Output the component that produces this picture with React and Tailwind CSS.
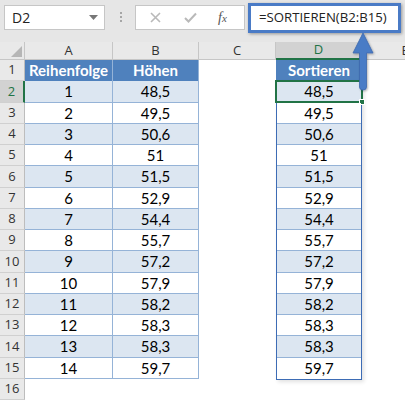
import React from "react";

const werte = ["48,5", "49,5", "50,6", "51", "51,5", "52,9", "54,4", "55,7", "57,2", "57,9", "58,2", "58,3", "58,3", "59,7"];

// Excel rows are about 21.25px high
const heights = Array.from({ length: 16 }, (_, i) => Math.round((i + 1) * 21.25) - Math.round(i * 21.25));
const hCls = (i) => (heights[i] === 22 ? "h-[22px]" : "h-[21px]");

const ui = { fontFamily: '"Open Sans", "Noto Sans", sans-serif' };
const cell = { fontFamily: 'Lato, "Noto Sans", sans-serif' };

function ColHead({ label, active, last }) {
  return (
    <div
      className={
        "h-[18px] flex items-center justify-center text-[13px] " +
        (active
          ? "bg-[#d2d2d2] text-[#217346] border-b-2 border-[#217346] border-r border-r-[#bdbdbd]"
          : "bg-[#e9e9e9] text-[#333] border-b border-[#c6c6c6] " + (last ? "" : "border-r border-r-[#c6c6c6]"))
      }
      style={ui}
    >
      {label}
    </div>
  );
}

function RowHeaders() {
  return (
    <div className="w-[25px] flex flex-col shrink-0" style={ui}>
      <div className="h-[18px] bg-[#e9e9e9] border-r border-b border-[#c6c6c6] flex items-end justify-end p-[2px]">
        <svg width="11" height="11" viewBox="0 0 11 11">
          <polygon points="11,0 11,11 0,11" fill="#b6b6b6" />
        </svg>
      </div>
      {heights.map((h, i) => (
        <div
          key={i}
          className={
            hCls(i) +
            " flex items-center justify-center text-[13px] border-b border-[#d0d0d0] " +
            (i === 1
              ? "bg-[#d2d2d2] text-[#217346] border-r-2 border-r-[#217346]"
              : "bg-[#e9e9e9] text-[#333] border-r border-r-[#bdbdbd]")
          }
        >
          {i + 1}
        </div>
      ))}
    </div>
  );
}

function TableCol({ letter, width, title, values }) {
  return (
    <div className={"flex flex-col shrink-0 " + width}>
      <ColHead label={letter} />
      <div
        className={hCls(0) + " bg-[#4f81bd] text-white font-bold text-[15px] flex items-center justify-center border-r border-[#95b3d7]"}
        style={cell}
      >
        {title}
      </div>
      {values.map((v, i) => (
        <div
          key={i}
          className={
            hCls(i + 1) +
            " flex items-center justify-center text-[15px] text-black border-r border-b border-[#95b3d7] " +
            (i % 2 === 0 ? "bg-[#dce6f1]" : "bg-white")
          }
          style={cell}
        >
          {v}
        </div>
      ))}
      <div className={hCls(15)} />
    </div>
  );
}

function Arrow() {
  return (
    <svg className="absolute left-[348px] top-[30px]" width="30" height="64" viewBox="0 0 30 64">
      <defs>
        <filter id="sh" x="-30%" y="-10%" width="160%" height="130%">
          <feDropShadow dx="1" dy="1" stdDeviation="1.2" floodColor="#000" floodOpacity="0.3" />
        </filter>
      </defs>
      <path
        d="M15 3 L25 23 L18.5 23 L18.5 57 Q18.5 60 15 60 Q11.5 60 11.5 57 L11.5 23 L5 23 Z"
        fill="#4a7bc6"
        stroke="#3c68ad"
        strokeWidth="0.8"
        filter="url(#sh)"
      />
    </svg>
  );
}

export default function App() {
  const ids = werte.map((_, i) => i + 1);
  return (
    <div className="relative w-[405px] h-[401px] overflow-hidden bg-white">
      {/* formula bar */}
      <div className="h-[42px] bg-[#e6e6e6] flex items-start" style={ui}>
        <div className="ml-[4px] mt-[5px] w-[101px] h-[25px] bg-white border border-[#c6c6c6] flex items-center justify-between pl-[7px] pr-[6px]">
          <span className="text-[14px] text-[#222]">D2</span>
          <svg width="9" height="5" viewBox="0 0 9 5">
            <polygon points="0,0 9,0 4.5,5" fill="#777" />
          </svg>
        </div>
        <div className="ml-[15px] mt-[12px] flex flex-col gap-[2px]">
          <div className="w-[2px] h-[2px] bg-[#a6a6a6]" />
          <div className="w-[2px] h-[2px] bg-[#a6a6a6]" />
          <div className="w-[2px] h-[2px] bg-[#a6a6a6]" />
        </div>
        <div className="ml-[13px] mt-[5px] w-[110px] h-[25px] bg-white border border-[#c6c6c6] flex items-center">
          <svg className="ml-[14px]" width="11" height="11" viewBox="0 0 11 11">
            <path d="M1 1 L10 10 M10 1 L1 10" stroke="#b9b9b9" strokeWidth="1.6" />
          </svg>
          <svg className="ml-[23px]" width="13" height="11" viewBox="0 0 13 11">
            <path d="M1 6 L4.5 9.5 L12 1.5" stroke="#b9b9b9" strokeWidth="2" fill="none" />
          </svg>
          <span className="ml-[21px] text-[14px] italic text-[#555]" style={{ fontFamily: '"Liberation Serif", serif' }}>
            f<span className="text-[11px]">x</span>
          </span>
        </div>
        <div className="ml-[3px] mt-[3px] w-[153px] h-[30px] bg-white border-[3px] border-[#4a7bc6] shadow-[1px_1px_3px_rgba(0,0,0,0.35)] flex items-center pl-[8px]">
          <span className="text-[13.2px] text-[#222] whitespace-nowrap">=SORTIEREN(B2:B15)</span>
        </div>
      </div>

      {/* grid */}
      <div className="flex">
        <RowHeaders />
        <TableCol letter="A" width="w-[88px]" title="Reihenfolge" values={ids} />
        <TableCol letter="B" width="w-[86px]" title="Höhen" values={werte} />

        <div className="w-[77px] flex flex-col shrink-0">
          <ColHead label="C" />
        </div>

        <div className="w-[86px] flex flex-col shrink-0">
          <ColHead label="D" active />
          <div
            className={hCls(0) + " bg-[#4f81bd] text-white font-bold text-[15px] flex items-center justify-center"}
            style={cell}
          >
            Sortieren
          </div>
          <div className="border-l border-r border-b border-[#3d6cb5] shadow-[2px_2px_4px_rgba(0,0,0,0.12)]">
            {werte.map((v, i) => (
              <div
                key={i}
                className={
                  hCls(i + 1) +
                  " relative flex items-center justify-center text-[15px] text-black " +
                  (i < werte.length - 1 ? "border-b border-[#95b3d7] " : "") +
                  (i % 2 === 0 ? "bg-[#dce6f1]" : "bg-white")
                }
                style={cell}
              >
                {v}
                {i === 0 && (
                  <div className="absolute -left-[2px] -top-[1px] -right-[2px] -bottom-[1px] border-2 border-[#217346]">
                    <div className="absolute -right-[4px] -bottom-[4px] w-[6px] h-[6px] bg-[#217346] border border-white" />
                  </div>
                )}
              </div>
            ))}
          </div>
        </div>

        <div className="w-[86px] flex flex-col shrink-0">
          <ColHead label="E" last />
        </div>
      </div>

      <Arrow />
    </div>
  );
}
